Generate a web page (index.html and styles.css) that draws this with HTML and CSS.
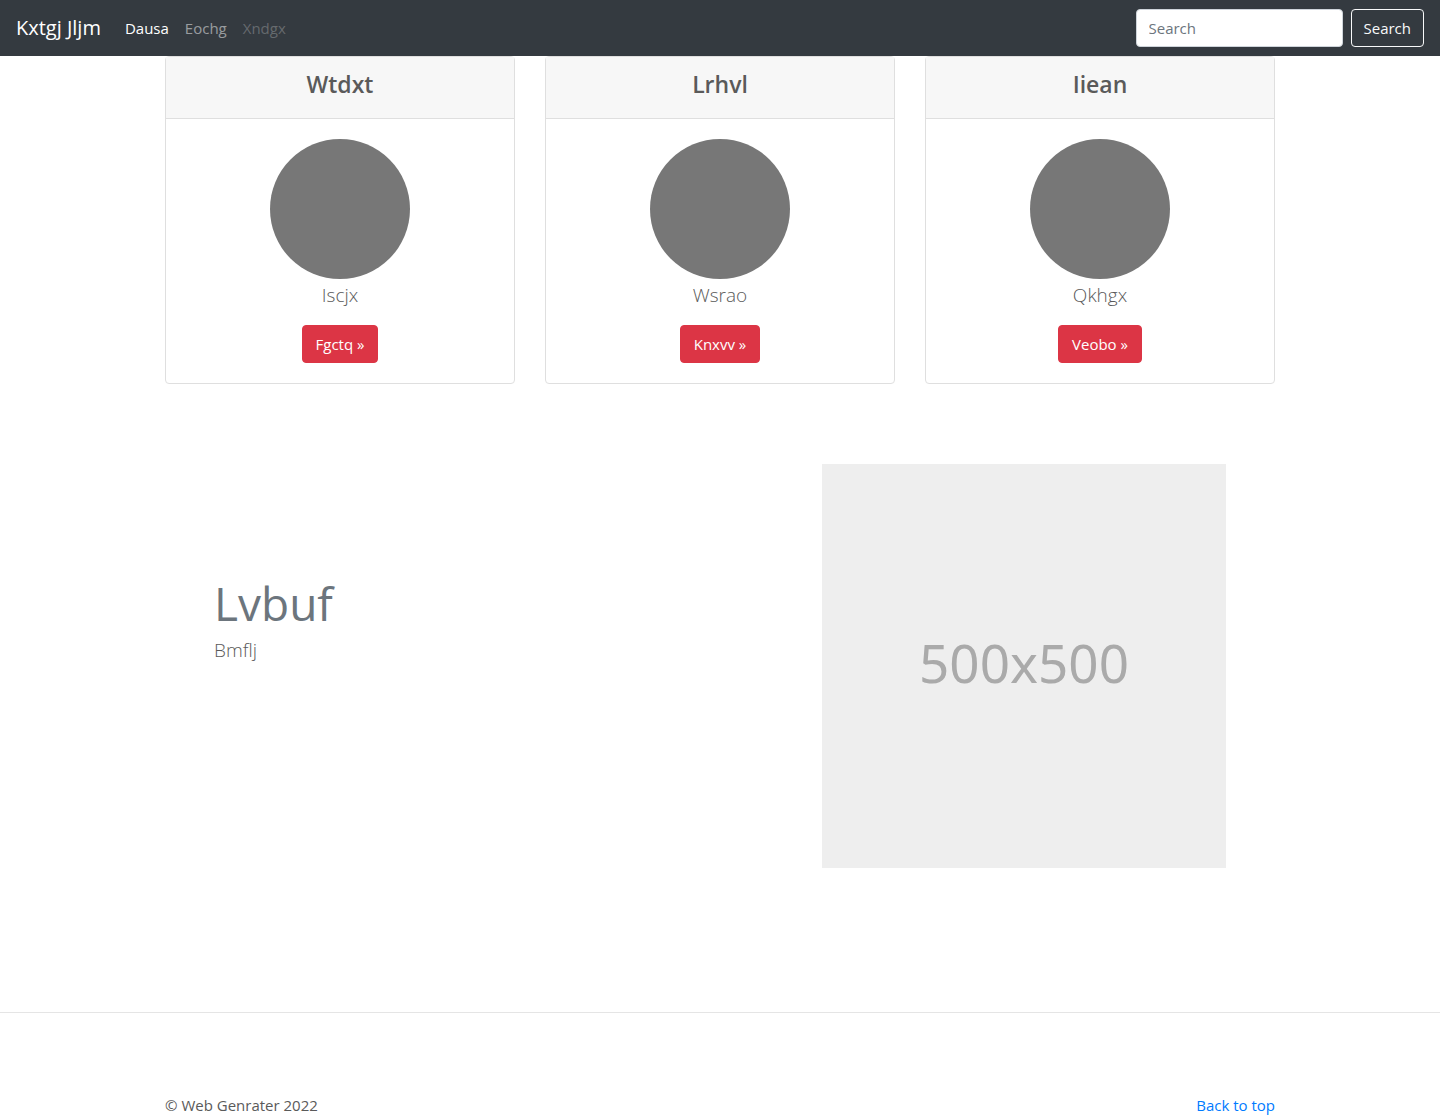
FILE: index.html
```html
<!DOCTYPE html>
<html lang="en">
<head>
  <meta charset="utf-8">
  <meta name="viewport" content="width=device-width, initial-scale=1">
  <title>Kxtgj Jljm</title>
  <link rel="stylesheet" href="styles.css">
</head>
<body id="top">
  <header class="navbar">
    <a class="brand" href="#">Kxtgj Jljm</a>
    <nav class="nav">
      <a class="nav-link active" href="#">Dausa</a>
      <a class="nav-link" href="#">Eochg</a>
      <a class="nav-link disabled" href="#" aria-disabled="true">Xndgx</a>
    </nav>
    <form class="search">
      <input class="search-input" type="search" placeholder="Search" aria-label="Search">
      <button class="btn btn-outline" type="submit">Search</button>
    </form>
  </header>

  <main>
    <section class="container cards">
      <article class="card">
        <div class="card-header"><h2 class="card-title">Wtdxt</h2></div>
        <div class="card-body">
          <div class="circle"></div>
          <p class="lead">Iscjx</p>
          <a class="btn btn-danger" href="#">Fgctq »</a>
        </div>
      </article>
      <article class="card">
        <div class="card-header"><h2 class="card-title">Lrhvl</h2></div>
        <div class="card-body">
          <div class="circle"></div>
          <p class="lead">Wsrao</p>
          <a class="btn btn-danger" href="#">Knxvv »</a>
        </div>
      </article>
      <article class="card">
        <div class="card-header"><h2 class="card-title">Iiean</h2></div>
        <div class="card-body">
          <div class="circle"></div>
          <p class="lead">Qkhgx</p>
          <a class="btn btn-danger" href="#">Veobo »</a>
        </div>
      </article>
    </section>

    <section class="container featurette">
      <div class="featurette-text">
        <h2 class="featurette-heading">Lvbuf</h2>
        <p class="lead">Bmflj</p>
      </div>
      <div class="placeholder">500x500</div>
    </section>
  </main>

  <hr class="divider">

  <footer class="container footer">
    <p class="copyright">© Web Genrater 2022</p>
    <a class="top-link" href="#top">Back to top</a>
  </footer>
</body>
</html>
```

FILE: styles.css
```css
*, *::before, *::after { box-sizing: border-box; }

body {
  margin: 0;
  background: #fff;
  color: #5a5a5a;
  font-family: "Segoe UI", "Open Sans", "Noto Sans", sans-serif;
  font-size: 15px;
  line-height: 24px;
}

h2, p { margin: 0; }
a { text-decoration: none; }

.container {
  width: 100%;
  max-width: 1140px;
  margin: 0 auto;
  padding: 0 15px;
}

/* Navigation bar */
.navbar {
  display: flex;
  align-items: center;
  min-height: 56px;
  padding: 8px 16px;
  background: #343a40;
}

.brand {
  margin-right: 16px;
  color: #fff;
  font-size: 20px;
  line-height: 30px;
}

.nav { display: flex; }

.nav-link {
  padding: 8px;
  color: rgba(255, 255, 255, .5);
}

.nav-link.active { color: #fff; }
.nav-link.disabled { color: rgba(255, 255, 255, .25); }

.search {
  display: flex;
  gap: 8px;
  margin-left: auto;
}

.search-input {
  width: 207px;
  height: 38px;
  padding: 6px 12px;
  border: 1px solid #ced4da;
  border-radius: 4px;
  background: #fff;
  color: #495057;
  font: inherit;
  appearance: none;
}

.search-input::placeholder { color: #6c757d; opacity: 1; }

.btn {
  display: inline-block;
  padding: 6px 12px;
  border: 1px solid transparent;
  border-radius: 4px;
  font: inherit;
  cursor: pointer;
}

.btn-outline {
  border-color: #f8f9fa;
  background: transparent;
  color: #f8f9fa;
}

.btn-danger {
  padding: 6px 13px;
  border-color: #dc3545;
  background: #dc3545;
  color: #fff;
}

/* Cards */
.cards {
  display: grid;
  grid-template-columns: repeat(3, 1fr);
  gap: 30px;
}

.card {
  border: 1px solid #dfdfdf;
  border-radius: 4px;
  text-align: center;
}

.card-header {
  padding: 13px 20px 19px;
  border-bottom: 1px solid #dfdfdf;
  background: #f7f7f7;
}

.card-title {
  font-size: 23px;
  font-weight: 600;
  line-height: 29px;
}

.card-body {
  display: flex;
  flex-direction: column;
  align-items: center;
  padding: 20px;
}

.card-body .lead { margin-bottom: 14px; }

.circle {
  width: 140px;
  height: 140px;
  border-radius: 50%;
  background: #777;
}

.lead {
  font-size: 19px;
  font-weight: 300;
  line-height: 32px;
}

/* Featurette */
.featurette {
  display: grid;
  grid-template-columns: 3fr 2fr;
  gap: 2px;
  margin-top: 80px;
  padding: 0 64px;
}

.featurette-text { padding-top: 114px; }

.featurette-heading {
  margin-bottom: 6px;
  color: #6c757d;
  font-size: 46px;
  font-weight: 400;
  line-height: 50px;
}

.placeholder {
  display: flex;
  align-items: center;
  justify-content: center;
  aspect-ratio: 1;
  padding-bottom: 6px;
  background: #eee;
  color: #aaa;
  font-family: "Noto Sans", "Open Sans", sans-serif;
  font-size: 53px;
}

/* Footer */
.divider {
  margin: 144px 0 80px;
  border: 0;
  border-top: 1px solid #e5e5e5;
}

.footer {
  display: flex;
  justify-content: space-between;
}

.top-link { color: #007bff; }
```
